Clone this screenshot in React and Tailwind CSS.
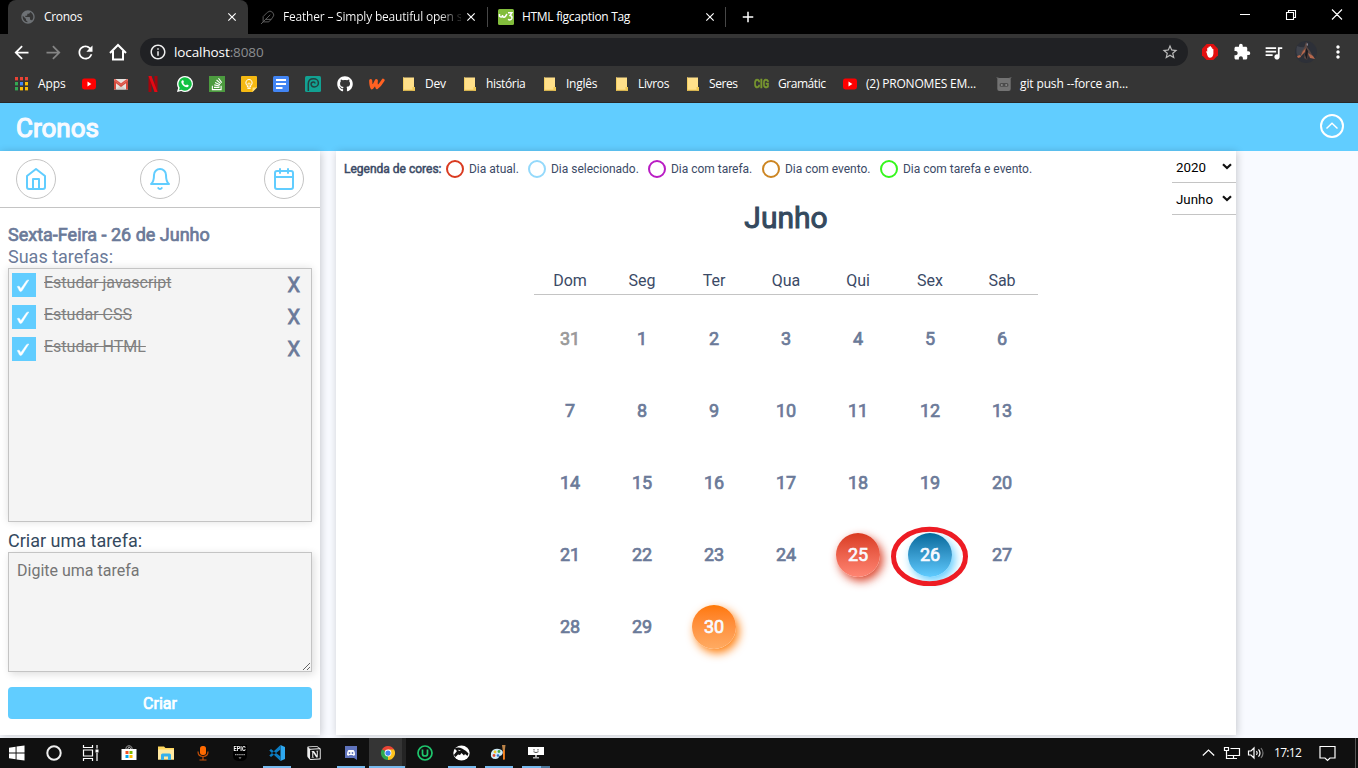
import React from "react";
import { FiHome, FiBell, FiCalendar, FiFeather } from "react-icons/fi";
import { FaStackOverflow, FaGithub } from "react-icons/fa";
import { MdExtension, MdQueueMusic, MdOutlineInfo, MdStarBorder, MdArrowBack, MdArrowForward, MdRefresh, MdMoreVert, MdPublic, MdClose, MdAdd } from "react-icons/md";
import { SiNotion } from "react-icons/si";

const FAUX_BOLD = "[-webkit-text-stroke:0.7px_currentColor]";

function YoutubeIcon() {
  return (
    <svg width="16" height="16" viewBox="0 0 16 16">
      <rect x="1" y="2.5" width="14" height="11" rx="2.4" fill="#f00" />
      <path d="M6.5 5.6v4.8L10.4 8z" fill="#fff" />
    </svg>
  );
}

function AppsIcon() {
  const colors = ["#ea4335", "#ea4335", "#ea4335", "#34a853", "#4285f4", "#fbbc05", "#34a853", "#fbbc05", "#fbbc05"];
  return (
    <svg width="16" height="16" viewBox="0 0 16 16">
      {colors.map((c, i) => (
        <rect key={i} x={2 + (i % 3) * 5} y={1 + Math.floor(i / 3) * 5} width="3" height="3.4" fill={c} />
      ))}
    </svg>
  );
}

function GmailIcon() {
  return (
    <svg width="16" height="16" viewBox="0 0 16 16">
      <path d="M1 3h14v10.5H1z" fill="#e8e4e0" />
      <path d="M3 13.500 8 9l5 4.500z" fill="#d5d0cc" />
      <path d="M1 13.500V4l7 5.200L15 4v9.500h-2V7.300L8 11 3 7.300v6.200z" fill="#d54b3d" />
      <path d="M1 4a1 1 0 0 1 1.500-.8L8 7.300l5.500-4.100A1 1 0 0 1 15 4l-7 5.500z" fill="#e0564a" />
    </svg>
  );
}

function NetflixIcon() {
  return (
    <svg width="16" height="16" viewBox="0 0 16 16">
      <path d="M3.500 0h3v16h-3zM9.500 0h3v16h-3z" fill="#a3060d" />
      <path d="M3.500 0h3l6 16h-3z" fill="#e50914" />
    </svg>
  );
}

function WhatsIcon() {
  return (
    <svg width="16" height="16" viewBox="0 0 16 16">
      <path d="M8 0a8 8 0 0 1 0 16 8 8 0 0 1-3.800-1L0 16l1.100-4A8 8 0 0 1 8 0z" fill="#fff" />
      <path d="M8 1.300a6.700 6.700 0 1 1-3.500 12.400L2 14.300l.7-2.500A6.700 6.700 0 0 1 8 1.300z" fill="#12c143" />
      <path d="M5.500 4.300c.9-.3 1 .5 1.400 1.500.1.500-.6.900-.6 1.100.5 1.100 1.500 1.900 2.600 2.300.3 0 .7-.9 1.100-.8l1.600.8c.3.300-.1 1.800-1.600 2-2.400.1-5.500-2.700-5.700-5.200 0-.8.5-1.500 1.200-1.700z" fill="#fff" />
    </svg>
  );
}

function StackIcon() {
  return (
    <span className="flex h-4 w-4 items-center justify-center bg-[#4c9b3f]">
      <FaStackOverflow size={14} color="#fff" />
    </span>
  );
}

function KeepIcon() {
  return (
    <svg width="16" height="16" viewBox="0 0 16 16">
      <path d="M1 0h14a1 1 0 0 1 1 1v10.500L11.500 16H1a1 1 0 0 1-1-1V1a1 1 0 0 1 1-1z" fill="#f5b912" />
      <path d="M11.500 11.500H16L11.500 16z" fill="#ffdf7d" />
      <path d="M6.400 9.800C3.900 8 4.600 3.500 8 3.500S12.100 8 9.600 9.800V11H6.400zM6.400 12.400h3.200" fill="none" stroke="#fff" strokeWidth="1" />
      <path d="M7 9.800V7.200h2v2.600" fill="none" stroke="#fff" strokeWidth="0.7" />
    </svg>
  );
}

function DocsIcon() {
  return (
    <svg width="16" height="16" viewBox="0 0 16 16">
      <rect width="16" height="16" rx="1.500" fill="#4285f4" />
      <path d="M3 4h10M3 8h10M3 12h6.500" stroke="#fff" strokeWidth="1.800" />
    </svg>
  );
}

function SwirlIcon() {
  return (
    <svg width="16" height="16" viewBox="0 0 16 16">
      <rect width="16" height="16" rx="1.500" fill="#12a192" />
      <path d="M3.300 15V7.800C3.300 4.600 5.600 2.700 8.600 2.700c2.900 0 4.800 1.900 4.800 4.200 0 2.400-1.900 4-4.200 4-1.900 0-3.100-1.100-3.100-2.600 0-1.300 1-2.300 2.300-2.300 1 0 1.600.6 1.600 1.400" fill="none" stroke="#24403f" strokeWidth="1.500" />
    </svg>
  );
}

function WattpadIcon() {
  return (
    <svg width="17" height="16" viewBox="0 0 17 16">
      <path d="M1.800 4.300c0 3 .3 6 1.300 7.700C5 10.400 6.500 7.500 7.800 4.500c-.3 2.700-.2 5.500.7 7.300C11 10 13 7.300 15 4" fill="none" stroke="#ff6122" strokeWidth="3.300" strokeLinecap="round" strokeLinejoin="round" />
    </svg>
  );
}

function FolderIcon() {
  return (
    <svg width="16" height="16" viewBox="0 0 16 16">
      <path d="M2 1.500h11v9.500h1v3.500H2z" fill="#ffe08a" />
      <path d="M2 1.500h1v13H2z" fill="#f3cf62" />
      <path d="M2 13.700h12v1H2z" fill="#eec34b" />
      <path d="M11.500 11H14v3.500h-2.500z" fill="#f0c955" />
    </svg>
  );
}

function CigIcon() {
  return (
    <span className="block w-4 origin-left scale-x-[0.78] font-['Roboto',sans-serif] text-[12px] leading-4 font-bold text-[#79982f] [-webkit-text-stroke:0.5px_currentColor]">
      CIG
    </span>
  );
}

function BotIcon() {
  return (
    <svg width="16" height="16" viewBox="0 0 16 16">
      <path d="M.3 1 3.500 2v1.500H1.500zM15.700 1 12.500 2v1.500h2z" fill="#666" />
      <rect x="1.300" y="2" width="13.400" height="13" rx="2" fill="#737373" />
      <rect x="3.500" y="7" width="9" height="3.800" rx="1.900" fill="#4b4b4b" />
      <circle cx="5.800" cy="8.900" r="1" fill="#8a8a8a" />
      <circle cx="10.200" cy="8.900" r="1" fill="#8a8a8a" />
    </svg>
  );
}

const BOOKMARKS = [
  { icon: <AppsIcon />, label: "Apps", w: "w-[60px]", t: "tracking-[-0.1px] pl-px" },
  { icon: <YoutubeIcon />, w: "w-4" },
  { icon: <GmailIcon />, w: "w-4" },
  { icon: <NetflixIcon />, w: "w-4" },
  { icon: <WhatsIcon />, w: "w-4" },
  { icon: <StackIcon />, w: "w-4" },
  { icon: <KeepIcon />, w: "w-4" },
  { icon: <DocsIcon />, w: "w-4" },
  { icon: <SwirlIcon />, w: "w-4" },
  { icon: <FaGithub size={16} color="#fff" />, w: "w-4" },
  { icon: <WattpadIcon />, w: "w-4" },
  { icon: <FolderIcon />, label: "Dev", w: "w-[45px]", t: "tracking-[-0.2px]" },
  { icon: <FolderIcon />, label: "história", w: "w-[64px]", t: "tracking-[-0.35px]" },
  { icon: <FolderIcon />, label: "Inglês", w: "w-[56px]", t: "tracking-[-0.25px]" },
  { icon: <FolderIcon />, label: "Livros", w: "w-[55px]", t: "tracking-[-0.35px]" },
  { icon: <FolderIcon />, label: "Seres", w: "w-[53px]", t: "tracking-[-0.4px]" },
  { icon: <CigIcon />, label: "Gramátic", w: "w-[72px]", t: "tracking-[-0.45px]" },
  { icon: <YoutubeIcon />, label: "(2) PRONOMES EM...", w: "w-[138px]", t: "tracking-[-0.2px]" },
  { icon: <BotIcon />, label: "git push --force an...", w: "w-[140px]", t: "tracking-[-0.13px]" },
];

function TabStrip() {
  return (
    <div className="flex h-[34px] bg-black pl-2 text-white">
      <div className="flex w-[240px] items-center rounded-t-lg bg-[#353535] pl-[12px]">
        <MdPublic size={16} color="#6d7175" />
        <span className="ml-2 w-[181px] text-[12px] tracking-[-0.3px]">Cronos</span>
        <MdClose size={14} />
      </div>
      <div className="flex w-[239px] items-center pl-[12px]">
        <FiFeather size={15} color="#5c5c5c" strokeWidth={1.6} />
        <span className="ml-[8px] w-[178px] bg-linear-to-r from-white from-88% to-[#333] to-98% bg-clip-text text-[12px] tracking-[-0.2px] whitespace-nowrap text-transparent">
          Feather – Simply beautiful open s
        </span>
        <MdClose size={14} className="ml-[3px]" />
      </div>
      <div className="flex w-[238px] items-center">
        <span className="h-5 w-px bg-[#474747]" />
        <svg width="16" height="16" viewBox="0 0 16 16" className="ml-[10px]">
          <rect width="16" height="16" rx="1.500" fill="#82bd3c" />
          <path d="M1.500 5v2.200Q3.500 9 4.500 7.200V6v1.200q1.500 2 3 0L9 5M10 3.800h3.800L12 6.500q2.500.5 1.800 3-1.300 2.300-3.800.8" fill="none" stroke="#fff" strokeWidth="1.500" />
        </svg>
        <span className="ml-2 w-[181px] text-[12px] tracking-[-0.3px]">HTML figcaption Tag</span>
        <MdClose size={14} />
      </div>
      <span className="mt-[7px] h-5 w-px bg-[#474747]" />
      <MdAdd size={18} className="mt-2 ml-[13px]" />
      <div className="ml-auto flex items-start pt-2 pr-[15px]">
        <svg width="104" height="14" viewBox="0 0 104 14" fill="none" stroke="#fff">
          <path d="M1 6.500h10M47.500 4.500h7v7h-7zM49.500 4.500v-2h7v7h-2M93 1.500l10 10M103 1.500l-10 10" strokeWidth="1.100" />
        </svg>
      </div>
    </div>
  );
}

function Toolbar() {
  return (
    <div className="flex h-9 items-center pl-[13px] text-white">
      <MdArrowBack size={21} className="-ml-[2px]" />
      <MdArrowForward size={21} color="#858585" className="ml-[11px]" />
      <MdRefresh size={21} className="ml-[11px]" />
      <svg width="20" height="20" viewBox="0 0 20 20" className="ml-[12px]" fill="none" stroke="#fff" strokeWidth="2">
        <path d="M2 11 10 3l8 8M5 9v8.500h10V9" />
      </svg>
      <div className="ml-[12px] flex h-7 w-[1048px] items-center rounded-full bg-[#202124] pr-[9px] pl-[9px]">
        <MdOutlineInfo size={18} color="#eee" />
        <span className="ml-[7px] text-[13.5px] tracking-[-0.1px]">
          localhost<span className="text-[#8b8d90]">:8080</span>
        </span>
        <MdStarBorder size={18} color="#bbb" className="ml-auto" />
      </div>
      <svg width="16" height="16" viewBox="0 0 16 16" className="ml-[14px]">
        <path d="M4.700 0h6.600L16 4.700v6.600L11.300 16H4.700L0 11.300V4.700z" fill="#e20f0f" />
        <path d="M4.800 9.300 4 7.500q.6-.6 1.200.3V4.200q.6-.9 1.200 0V3q.7-.9 1.300 0v-.5q.8-.8 1.300 0v1q.8-.7 1.200.2v1.400q.8-.6 1.200.2v4.500q-.5 4-3.500 4-2.200 0-3.100-4.500z" fill="#fff" />
      </svg>
      <MdExtension size={18} className="ml-[15px]" />
      <MdQueueMusic size={21} className="ml-[12px]" />
      <svg width="22" height="22" viewBox="0 0 22 22" className="ml-[11px]">
        <circle cx="11" cy="11" r="11" fill="#2d3038" />
        <path d="M2 5q5 2 8 1l-1 5-5 6Q0 12 2 5z" fill="#40434c" />
        <path d="M11 1l2 2-1 3 3 4 4 7-5-3-2 5-3-2 1-6-5 2 4-6z" fill="#5b4743" />
        <path d="M8 10l3-3-1 4-5 5M13 12l5 3 2 3-5-1zM2 15l3-1 1 2-3 1z" fill="#b5674c" />
        <path d="M11 7l2 3-1 9-2-5z" fill="#1a1b20" />
        <path d="M12 2l1 1-.5 2-1-1z" fill="#8b90a0" />
      </svg>
      <MdMoreVert size={20} className="ml-[11px]" />
    </div>
  );
}

function Bookmarks() {
  return (
    <div className="flex h-[33px] items-center gap-4 border-b border-[#282828] pb-[4px] pl-[13px] text-white">
      {BOOKMARKS.map((b, i) => (
        <div key={i} className={`flex shrink-0 items-center gap-2 ${b.w} ${i === 0 ? "-mr-[8px]" : ""}`}>
          <span className="flex w-4 shrink-0">{b.icon}</span>
          {b.label && <span className={`text-[12px] whitespace-nowrap ${b.t}`}>{b.label}</span>}
        </div>
      ))}
    </div>
  );
}

function Header() {
  return (
    <header className="flex h-12 items-center justify-between bg-[#61cdff] pr-[14px] pl-4">
      <h1 className="pt-[2px] text-[26px] leading-none font-normal text-[#f8faff] [-webkit-text-stroke:1.2px_currentColor]">Cronos</h1>
      <svg width="24" height="24" viewBox="0 0 24 24" fill="none" stroke="#fff" className="-mt-[2px]">
        <circle cx="12" cy="12" r="11" strokeWidth="2" />
        <path d="M6.500 14.500 12 9.300l5.500 5.200" strokeWidth="1.500" />
      </svg>
    </header>
  );
}

function RoundButton({ children }) {
  return <button className="flex h-10 w-10 items-center justify-center rounded-full border border-[#c4c4c4] text-[#61cdff]">{children}</button>;
}

function Sidebar() {
  const tasks = ["Estudar javascript", "Estudar CSS", "Estudar HTML"];
  return (
    <aside className="flex h-[584px] w-80 flex-col bg-white shadow-[1px_1px_8px_rgba(0,0,0,0.2)]">
      <nav className="flex h-[57px] items-center justify-between border-b border-[#c4c4c4] px-4">
        <RoundButton><FiHome size={24} /></RoundButton>
        <RoundButton><FiBell size={24} /></RoundButton>
        <RoundButton><FiCalendar size={24} /></RoundButton>
      </nav>
      <div className="flex flex-col px-2 pt-4">
        <h2 className={`text-[18px] leading-[22px] text-[#6b7a99] ${FAUX_BOLD}`}>Sexta-Feira - 26 de Junho</h2>
        <p className="text-[18px] leading-[22px] text-[#6b7a99]">Suas tarefas:</p>
        <ul className="h-[254px] border border-[#c4c4c4] bg-[#f4f4f4] px-[3px] pt-1 shadow-[0_0_8px_rgba(0,0,0,0.12)]">
          {tasks.map((t) => (
            <li key={t} className="flex h-8 items-start">
              <span className="flex h-6 w-6 items-center justify-center bg-[#61cdff]">
                <svg width="14" height="14" viewBox="0 0 14 14" fill="#fff" className="mt-px -ml-[3px]">
                  <path d="M1.300 7.600q1.900-.9 2.400.2l1.100 2L10.500 1.700q1-.8 2.300-.7L6 11.800q-1.500 1.400-2.400.3z" stroke="#fff" strokeWidth="0.5" />
                </svg>
              </span>
              <span className="ml-2 text-[16px] leading-5 text-[#808080] line-through">{t}</span>
              <span className="mr-[8px] ml-auto text-[20px] leading-6 text-[#6b7a99] [-webkit-text-stroke:0.8px_currentColor]">X</span>
            </li>
          ))}
        </ul>
        <label className="mt-[7px] h-[23px] text-[18px] leading-6 text-[#34495e]">Criar uma tarefa:</label>
        <textarea
          placeholder="Digite uma tarefa"
          className="block h-[120px] w-full resize border border-[#c4c4c4] bg-[#f4f4f4] p-2 text-[16px] leading-[19px] shadow-[2px_2px_8px_rgba(0,0,0,0.14)] placeholder:text-[#757575]"
        />
        <button className={`mt-[15px] h-8 rounded bg-[#61cdff] pt-[2px] text-[16px] text-white ${FAUX_BOLD}`}>Criar</button>
      </div>
    </aside>
  );
}

const LEGEND = [
  ["Dia atual.", "border-[#d93a20]", "w-[82px]"],
  ["Dia selecionado.", "border-[#94d9fb]", "w-[120px]"],
  ["Dia com tarefa.", "border-[#b91cc4]", "w-[114px]"],
  ["Dia com evento.", "border-[#cc8522]", "w-[118px]"],
  ["Dia com tarefa e evento.", "border-[#35f71c]", "w-[160px]"],
];

const DAYS = [31, ...Array.from({ length: 30 }, (_, i) => i + 1)];

const DAY_STYLE = {
  25: "text-[#f8faff] bg-linear-to-b from-[#d93a20] to-[#ff8573] shadow-[3px_4px_10px_rgba(217,58,32,0.95)]",
  26: "text-[#f8faff] bg-linear-to-b from-[#006a9c] to-[#5fcbff] shadow-[3px_4px_10px_rgba(97,205,255,1)]",
  30: "text-[#f8faff] bg-linear-to-b from-[#ff7800] to-[#ffab62] shadow-[3px_4px_10px_rgba(255,120,0,0.95)]",
};

function SelectBox({ value }) {
  return (
    <div className="flex h-8 w-16 items-center justify-between border-b border-[#c4c4c4] px-1 text-[13.333px] text-black">
      <span className="pt-[2px]">{value}</span>
      <svg width="10" height="7" viewBox="0 0 10 7" fill="none" stroke="#111" strokeWidth="2.200">
        <path d="M1 1.200 5 5l4-3.800" />
      </svg>
    </div>
  );
}

function Calendar() {
  return (
    <main className="flex h-[584px] w-[900px] flex-col bg-white shadow-[1px_1px_8px_rgba(0,0,0,0.2)]">
      <div className="flex h-16 justify-between pl-2">
        <div className="flex h-9 items-center text-[12px] text-[#3b4a66]">
          <span className="w-[102px] [-webkit-text-stroke:0.5px_currentColor]">Legenda de cores:</span>
          {LEGEND.map(([label, color, w]) => (
            <span key={label} className={`flex shrink-0 items-center gap-[5px] tracking-[-0.02px] whitespace-nowrap ${w}`}>
              <i className={`h-[18px] w-[18px] rounded-full border-2 ${color}`} />
              {label}
            </span>
          ))}
        </div>
        <div>
          <SelectBox value="2020" />
          <SelectBox value="Junho" />
        </div>
      </div>
      <h2 className="-mt-[15px] text-center text-[30px] leading-9 text-[#34495e] [-webkit-text-stroke:1px_currentColor]">Junho</h2>
      <div className="mx-auto mt-[31px] w-[504px]">
        <div className="grid h-[28px] grid-cols-7 border-b border-[#c4c4c4] text-center text-[16px] leading-[27px] text-[#3b4a66]">
          {["Dom", "Seg", "Ter", "Qua", "Qui", "Sex", "Sab"].map((d) => (
            <span key={d}>{d}</span>
          ))}
        </div>
        <div className="mt-2 grid grid-cols-7">
          {DAYS.map((d, i) => (
            <div key={i} className="relative flex h-[72px] items-center justify-center">
              <span
                className={`flex h-11 w-11 items-center justify-center rounded-full pb-[2px] text-[18px] ${FAUX_BOLD} ${
                  DAY_STYLE[d] || (d === 31 ? "text-[#999]" : "text-[#6b7a99]")
                }`}
              >
                {d}
              </span>
              {d === 26 && (
                <svg width="78" height="60" viewBox="0 0 78 60" className="absolute top-[7px] -left-[3px]">
                  <ellipse cx="38.500" cy="30.500" rx="36" ry="27.300" fill="none" stroke="#ed1c24" strokeWidth="5" />
                </svg>
              )}
            </div>
          ))}
        </div>
      </div>
    </main>
  );
}

function EpicIcon() {
  return (
    <span className="flex h-4 w-[14px] flex-col items-center rounded-b-[5px] bg-black">
      <span className="scale-x-[0.8] font-['Roboto',sans-serif] text-[7px] leading-[9px] font-bold text-white">EPIC</span>
      <svg width="10" height="6" viewBox="0 0 10 6">
        <path d="M0 .7h10" stroke="#999" strokeWidth="1.200" strokeDasharray="1.500 .6" />
        <path d="M3.500 3.500h3L5 4.800z" fill="#ccc" />
      </svg>
    </span>
  );
}

const TASKS = [
  <svg width="16" height="16" viewBox="0 0 17 16" fill="#fff"><path d="M0 2.300 7 1.300v6.200H0zM8 1.200 16.500 0v7.500H8zM0 8.500h7v6.200L0 13.700zM8 8.500h8.500V16L8 14.800z" /></svg>,
  <svg width="16" height="16" viewBox="0 0 16 16"><circle cx="8" cy="8" r="6.700" fill="none" stroke="#eee" strokeWidth="2" /></svg>,
  <svg width="17" height="16" viewBox="0 0 17 16" fill="none" stroke="#fff" strokeWidth="1.200"><path d="M1.500 0v2.500h9V0M1.500 16v-2.500h9V16M1.500 5h9v6h-9zM15 0v3.500M15 8v8" /><path d="M13.500 4.500h3v3h-3z" fill="#fff" stroke="none" /></svg>,
  <svg width="16" height="16" viewBox="0 0 16 16"><path d="M5 4V2.500Q8-1 11 2.500V4M7 4V3q1-1.500 2.500 0v1" fill="none" stroke="#aaa" /><path d="M.5 4h15v11h-15z" fill="#fff" /><path d="M4.500 6h3v3h-3z" fill="#f25022" /><path d="M8.500 6h3v3h-3z" fill="#7fba00" /><path d="M4.500 10h3v3h-3z" fill="#00a4ef" /><path d="M8.500 10h3v3h-3z" fill="#ffb900" /></svg>,
  <svg width="16" height="16" viewBox="0 0 16 16"><path d="M0 1.500h6l1.500 1.500H16v11.500H0z" fill="#ffd75e" /><path d="M0 4.500h16v10H0z" fill="#ffe9a2" /><path d="M3 14.500V10q0-1.500 1.500-1.500h7Q13 8.500 13 10v5h-3v-3.500H6V15H3z" fill="#37b0ea" /></svg>,
  <svg width="12" height="16" viewBox="0 0 12 16" className="ml-px"><rect x="3" y="1" width="6" height="9" rx="2.500" fill="#ff6a00" /><path d="M1 6.500Q1 11.500 6 11.500t5-5M6 12v3M2.500 15h7" fill="none" stroke="#c85008" strokeWidth="1.200" /></svg>,
  <EpicIcon />,
  <svg width="16" height="16" viewBox="0 0 16 16"><path d="M11.500 0 16 2v12l-4.500 2z" fill="#2ea8f0" /><path d="M11.500 0v4.500L2 12 .3 10.500zM11.500 16v-4.500L2 4 .3 5.500z" fill="#0c7dc4" /></svg>,
  <SiNotion size={14} color="#eee" />,
  <svg width="12" height="14" viewBox="0 0 12 14"><path d="M0 0h12v14l-3-2H0z" fill="#5f73bc" /><path d="M2 9q0-4 1.500-5h5Q10 5 10 9q-1 1-2 .5L7.500 9h-3l-.5.5Q3 10 2 9z" fill="#fff" /><circle cx="4.500" cy="7" r=".9" fill="#5f73bc" /><circle cx="7.500" cy="7" r=".9" fill="#5f73bc" /></svg>,
  <svg width="14" height="14" viewBox="0 0 16 16"><path d="M8 8 1.070 4A8 8 0 0 1 14.930 4z" fill="#e84435" /><path d="M8 8 14.930 4A8 8 0 0 1 8 16z" fill="#fcc31e" /><path d="M8 8v8A8 8 0 0 1 1.070 4z" fill="#2da94f" /><path d="M8 4h6.930L11 10z" fill="#fcc31e" /><path d="M1.070 4 4.500 10 8 8z" fill="#2da94f" /><circle cx="8" cy="8" r="3.900" fill="#fff" /><circle cx="8" cy="8" r="3" fill="#4285f4" /></svg>,
  <svg width="16" height="16" viewBox="0 0 16 16" fill="none" stroke="#1fc66d" strokeWidth="1.700"><circle cx="8" cy="8" r="7" /><path d="M5.500 4.500V9Q5.500 11 8 11t2.500-2V4.500" /></svg>,
  <svg width="17" height="16" viewBox="0 0 17 16"><ellipse cx="8.500" cy="8" rx="8.200" ry="7.500" fill="#fff" /><path d="M1.500 3.500Q5 1.500 9 3.500t6.500 5L14.500 11 12 9l-1 1.500L8.500 8 7 10 5 9.500 2.500 12 .8 10 4 6z" fill="#111" /><path d="M5 4.800 8 5.500 6 6z" fill="#fff" /></svg>,
  <svg width="17" height="16" viewBox="0 0 17 16"><path d="M1 8q2-5 8-4 5 1 3.500 5-1 2-3 2-1 3-4 3Q0 14 1 8z" fill="#cdeaf7" /><circle cx="5" cy="7" r="1.400" fill="#f3c623" /><circle cx="9" cy="6.500" r="1.400" fill="#45a847" /><circle cx="4" cy="10.500" r="1.400" fill="#e14a32" /><circle cx="8" cy="10.500" r="1.300" fill="#2b70ca" /><path d="M12 0h3.500l-.6 5h-2.200z" fill="#bb8348" /><path d="M13 5h1.900v9q-1 2-1.900 0z" fill="#f58220" /></svg>,
  <svg width="16" height="14" viewBox="0 0 16 14"><path d="M0 1h16v8H0z" fill="#fff" /><path d="M7 9h2v2h2v1.500H5V11h2z" fill="#aaa" /><path d="M6 3v1.500M10 3v1.500M5.500 5.700Q8 7.500 10.500 5.700" stroke="#222" strokeWidth="0.8" fill="none" /></svg>,
];

const RUNNING = new Set([7, 9, 10, 12, 13, 14]);

function Taskbar() {
  return (
    <footer className="flex h-[30px] bg-[#101010] text-white">
      {TASKS.map((icon, i) => (
        <div
          key={i}
          className={`relative flex items-center justify-center ${i === 0 ? "w-9" : "w-[37px]"} ${
            i === 10 ? "bg-linear-to-r from-[#353535] from-[33px] to-[#242424] to-[33px]" : ""
          } ${i < 3 ? "pr-[2px]" : ""}`}
        >
          {icon}
          {RUNNING.has(i) && (
            <span
              className={`absolute bottom-0 h-[2px] ${
                i === 10 ? "left-0 w-9 bg-[#76b9ed]" : i === 14 ? "left-[5px] w-7 bg-linear-to-r from-[#76b9ed] from-[19px] to-[#4a7699] to-[19px]" : "left-[5px] w-7 bg-[#76b9ed]"
              }`}
            />
          )}
        </div>
      ))}
      <div className="ml-auto flex items-center">
        <svg width="63" height="16" viewBox="0 0 63 16" fill="none" stroke="#fff" strokeWidth="1.200">
          <path d="M.8 10.500 6.500 5l5.700 5.500" />
          <path d="M28.500 3.500h9v7H25.500M31.500 10.500v3M27 13.500h8M22.500 2.500h4v3h-4zM24.500 5.500v8h3" />
          <path d="M46.500 6H49l3-3v10l-3-3h-2.500zM54.500 6q1.500 2 0 4M56.500 4.300q3 3.700 0 7.400" />
          <path d="M59 3q4 5 0 10" stroke="#777" />
        </svg>
        <span className="ml-[9px] w-[28px] text-[12px] tracking-[-0.7px]">17:12</span>
        <svg width="17" height="17" viewBox="0 0 17 17" fill="none" stroke="#fff" strokeWidth="1.200" className="ml-[17px]">
          <path d="M1 1.500h15V13h-5l-2.500 2.500L6 13H1z" />
        </svg>
        <span className="mr-[2px] ml-[19px] h-[30px] w-px bg-[#555]" />
      </div>
    </footer>
  );
}

export default function App() {
  return (
    <div className="flex h-[768px] w-[1358px] flex-col overflow-hidden bg-[#f8faff] font-['Roboto',sans-serif]">
      <div className="bg-[#353535] font-['Open_Sans',sans-serif]">
        <TabStrip />
        <Toolbar />
        <Bookmarks />
      </div>
      <Header />
      <div className="flex gap-4">
        <Sidebar />
        <Calendar />
      </div>
      <div className="mt-auto font-['Open_Sans',sans-serif]">
        <Taskbar />
      </div>
    </div>
  );
}
